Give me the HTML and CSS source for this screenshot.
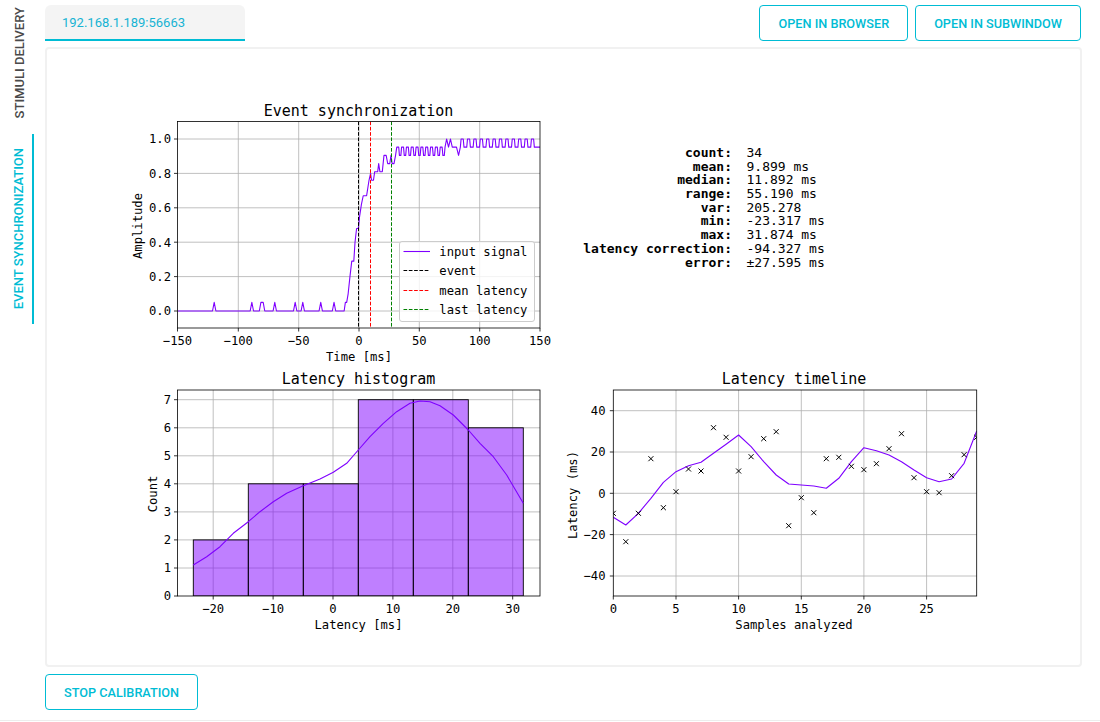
FILE: index.html
```html
<!DOCTYPE html>
<html lang="en">
<head>
<meta charset="utf-8">
<title>Event synchronization</title>
<link rel="stylesheet" href="styles.css">
</head>
<body>
<div class="app">
  <nav class="sidebar">
    <div class="vtab"><span>STIMULI DELIVERY</span></div>
    <div class="vtab active"><span>EVENT SYNCHRONIZATION</span></div>
  </nav>
  <main class="main">
    <div class="topbar">
      <div class="tab">192.168.1.189:56663</div>
      <div class="actions">
        <button class="btn">OPEN IN BROWSER</button>
        <button class="btn">OPEN IN SUBWINDOW</button>
      </div>
    </div>
    <section class="panel">
      <svg class="figure" width="1033" height="616" viewBox="47 49 1033 616">
        <defs>
          <clipPath id="c1"><rect x="177.5" y="121.5" width="362.5" height="206.5"/></clipPath>
          <clipPath id="c2"><rect x="177.5" y="390" width="362.5" height="206"/></clipPath>
          <clipPath id="c3"><rect x="613.3" y="390" width="363.4" height="206"/></clipPath>
          <path id="xm" d="M-2.5,-2.5L2.5,2.5M-2.5,2.5L2.5,-2.5"/>
        </defs>

        <!-- ============ Plot 1: Event synchronization ============ -->
        <text class="title" x="358.5" y="115.5">Event synchronization</text>
        <g class="grid">
          <line x1="238.3" y1="121.5" x2="238.3" y2="328"/>
          <line x1="298.7" y1="121.5" x2="298.7" y2="328"/>
          <line x1="359" y1="121.5" x2="359" y2="328"/>
          <line x1="419.3" y1="121.5" x2="419.3" y2="328"/>
          <line x1="479.7" y1="121.5" x2="479.7" y2="328"/>
          <line x1="177.5" y1="311" x2="540" y2="311"/>
          <line x1="177.5" y1="276.6" x2="540" y2="276.6"/>
          <line x1="177.5" y1="242.2" x2="540" y2="242.2"/>
          <line x1="177.5" y1="207.8" x2="540" y2="207.8"/>
          <line x1="177.5" y1="173.4" x2="540" y2="173.4"/>
          <line x1="177.5" y1="139" x2="540" y2="139"/>
        </g>
        <g clip-path="url(#c1)">
          <path class="sig" transform="translate(359 311) scale(1.2067 -172)" d="M-150,0 H-121.4 L-120,0.05 L-118.6,0 H-90.2 L-88.8,0.05 L-87.4,0 H-82.6 L-81.3,0.05 L-79.4,0.05 L-78.1,0 H-71.2 L-69.8,0.05 L-68.4,0 H-54.3 L-52.9,0.05 L-51.5,0 H-48 L-46.6,0.05 L-45.2,0 H-33.1 L-31.7,0.05 L-30.3,0 H-22.1 L-20.7,0.05 L-19.3,0 H-12.3 L-11.3,0.05 L-10.2,0.05 L-9,0.1 L-7.5,0.2 L-6,0.29 L-4.3,0.29 L-3.3,0.4 L-2,0.48 L-0.6,0.48 L0.5,0.55 L2,0.62 L3.5,0.67 L6.3,0.67 L8.3,0.76 L9.6,0.8 L10.4,0.76 L12,0.76 L13,0.81 L15.5,0.81 L16.3,0.857 L17.3,0.81 L19.3,0.81 L20.7,0.905 L22.5,0.905 L23.8,0.857 L25.5,0.857 L26.5,0.905 L27.5,0.857 L29,0.857 L30.3,0.905 L31.3,0.953 h1.6 l0.6,-0.048 h1.2 l0.6,0.048 h1.6 l0.6,-0.048 h1.2 l0.6,0.048 h1.6 l0.6,-0.048 h1.2 l0.6,0.048 h1.6 l0.6,-0.048 h1.2 l0.6,0.048 h1.6 l0.6,-0.048 h1.2 l0.6,0.048 h1.6 l0.6,-0.048 h1.2 l0.6,0.048 h1.6 l0.6,-0.048 h1.2 l0.6,0.048 h1.6 l0.6,-0.048 h1.2 l0.6,0.048 h1.6 l0.6,-0.048 h1.2 l0.6,0.048 h1.6 l0.6,-0.048 h1.2 l0.6,0.048 L72.6,1 L74.2,0.953 L75.8,1 L77.3,0.953 L80.8,0.953 L82.5,0.905 L84,0.953 l0.6,0.047 h1.8 l0.6,-0.047 h2.3 l0.6,0.047 h1.8 l0.6,-0.047 h2.3 l0.6,0.047 h1.8 l0.6,-0.047 h2.3 l0.6,0.047 h1.8 l0.6,-0.047 h2.3 l0.6,0.047 h1.8 l0.6,-0.047 h2.3 l0.6,0.047 h1.8 l0.6,-0.047 h2.3 l0.6,0.047 h1.8 l0.6,-0.047 h2.3 l0.6,0.047 h1.8 l0.6,-0.047 h2.3 l0.6,0.047 h1.8 l0.6,-0.047 h2.3 l0.6,0.047 h1.8 l0.6,-0.047 h2.3 l0.6,0.047 h1.8 l0.6,-0.047 h2.3 l0.6,0.047 h1.8 l0.6,-0.047 h2.3 H150"/>
          <line class="dash k" x1="358.5" y1="121.5" x2="358.5" y2="328"/>
          <line class="dash r" x1="370.5" y1="121.5" x2="370.5" y2="328"/>
          <line class="dash g" x1="391.5" y1="121.5" x2="391.5" y2="328"/>
        </g>
        <rect class="spine" x="177.5" y="121.5" width="362.5" height="206.5"/>
        <g class="ticks">
          <line x1="177.5" y1="328" x2="177.5" y2="331.5"/>
          <line x1="238.3" y1="328" x2="238.3" y2="331.5"/>
          <line x1="298.7" y1="328" x2="298.7" y2="331.5"/>
          <line x1="359" y1="328" x2="359" y2="331.5"/>
          <line x1="419.3" y1="328" x2="419.3" y2="331.5"/>
          <line x1="479.7" y1="328" x2="479.7" y2="331.5"/>
          <line x1="540" y1="328" x2="540" y2="331.5"/>
          <line x1="174" y1="311" x2="177.5" y2="311"/>
          <line x1="174" y1="276.6" x2="177.5" y2="276.6"/>
          <line x1="174" y1="242.2" x2="177.5" y2="242.2"/>
          <line x1="174" y1="207.8" x2="177.5" y2="207.8"/>
          <line x1="174" y1="173.4" x2="177.5" y2="173.4"/>
          <line x1="174" y1="139" x2="177.5" y2="139"/>
        </g>
        <g class="xt">
          <text x="177.5" y="344.5">−150</text>
          <text x="238.3" y="344.5">−100</text>
          <text x="298.7" y="344.5">−50</text>
          <text x="359" y="344.5">0</text>
          <text x="419.3" y="344.5">50</text>
          <text x="479.7" y="344.5">100</text>
          <text x="540" y="344.5">150</text>
        </g>
        <g class="yt">
          <text x="171" y="315.4">0.0</text>
          <text x="171" y="281">0.2</text>
          <text x="171" y="246.6">0.4</text>
          <text x="171" y="212.2">0.6</text>
          <text x="171" y="177.8">0.8</text>
          <text x="171" y="143.4">1.0</text>
        </g>
        <text class="lbl" x="359" y="361">Time [ms]</text>
        <text class="lbl" transform="translate(141.5 226) rotate(-90)">Amplitude</text>
        <g class="legend">
          <rect x="399.5" y="241.5" width="135" height="80" rx="2.5"/>
          <line class="sig" x1="403.5" y1="251.5" x2="430" y2="251.5"/>
          <line class="dash k" x1="403.5" y1="270.5" x2="430" y2="270.5"/>
          <line class="dash r" x1="403.5" y1="290.5" x2="430" y2="290.5"/>
          <line class="dash g" x1="403.5" y1="309.5" x2="430" y2="309.5"/>
          <text x="439.3" y="255.9">input signal</text>
          <text x="439.3" y="275.2">event</text>
          <text x="439.3" y="294.5">mean latency</text>
          <text x="439.3" y="313.5">last latency</text>
        </g>

        <!-- ============ Stats ============ -->
        <g class="stats">
          <g class="key">
            <text x="732" y="157">count:</text>
            <text x="732" y="170.7">mean:</text>
            <text x="732" y="184.4">median:</text>
            <text x="732" y="198.1">range:</text>
            <text x="732" y="211.8">var:</text>
            <text x="732" y="225.4">min:</text>
            <text x="732" y="239.1">max:</text>
            <text x="732" y="252.8">latency correction:</text>
            <text x="732" y="266.5">error:</text>
          </g>
          <g class="val">
            <text x="746.5" y="157">34</text>
            <text x="746.5" y="170.7">9.899 ms</text>
            <text x="746.5" y="184.4">11.892 ms</text>
            <text x="746.5" y="198.1">55.190 ms</text>
            <text x="746.5" y="211.8">205.278</text>
            <text x="746.5" y="225.4">-23.317 ms</text>
            <text x="746.5" y="239.1">31.874 ms</text>
            <text x="746.5" y="252.8">-94.327 ms</text>
            <text x="746.5" y="266.5">±27.595 ms</text>
          </g>
        </g>

        <!-- ============ Plot 2: Latency histogram ============ -->
        <text class="title" x="358.5" y="383.5">Latency histogram</text>
        <g class="grid">
          <line x1="213.2" y1="390" x2="213.2" y2="596"/>
          <line x1="273.1" y1="390" x2="273.1" y2="596"/>
          <line x1="333" y1="390" x2="333" y2="596"/>
          <line x1="392.9" y1="390" x2="392.9" y2="596"/>
          <line x1="452.8" y1="390" x2="452.8" y2="596"/>
          <line x1="512.7" y1="390" x2="512.7" y2="596"/>
          <line x1="177.5" y1="568" x2="540" y2="568"/>
          <line x1="177.5" y1="539.9" x2="540" y2="539.9"/>
          <line x1="177.5" y1="511.9" x2="540" y2="511.9"/>
          <line x1="177.5" y1="483.8" x2="540" y2="483.8"/>
          <line x1="177.5" y1="455.8" x2="540" y2="455.8"/>
          <line x1="177.5" y1="427.8" x2="540" y2="427.8"/>
          <line x1="177.5" y1="399.7" x2="540" y2="399.7"/>
        </g>
        <g class="bars" clip-path="url(#c2)">
          <rect x="193.3" y="539.9" width="55" height="56.1"/>
          <rect x="248.3" y="483.8" width="55" height="112.2"/>
          <rect x="303.3" y="483.8" width="55" height="112.2"/>
          <rect x="358.3" y="399.7" width="55" height="196.3"/>
          <rect x="413.3" y="399.7" width="55" height="196.3"/>
          <rect x="468.3" y="427.8" width="55" height="168.2"/>
        </g>
        <polyline class="sig" points="193.3,565 206.7,556.7 220,546.7 233.3,533.3 248.3,521.7 260,511.7 273.3,501.7 286.7,493.3 303.3,485.7 320,479 333.3,472.3 346.7,463.3 358.3,450 370,436.7 383.3,423.3 396.7,411.7 410,403.3 420,401 430,401.7 440,405.7 453.3,415 468.3,430 480,443.3 493.3,456.7 506.7,475 523.3,503.3"/>
        <rect class="spine" x="177.5" y="390" width="362.5" height="206"/>
        <g class="ticks">
          <line x1="213.2" y1="596" x2="213.2" y2="599.5"/>
          <line x1="273.1" y1="596" x2="273.1" y2="599.5"/>
          <line x1="333" y1="596" x2="333" y2="599.5"/>
          <line x1="392.9" y1="596" x2="392.9" y2="599.5"/>
          <line x1="452.8" y1="596" x2="452.8" y2="599.5"/>
          <line x1="512.7" y1="596" x2="512.7" y2="599.5"/>
          <line x1="174" y1="596" x2="177.5" y2="596"/>
          <line x1="174" y1="568" x2="177.5" y2="568"/>
          <line x1="174" y1="539.9" x2="177.5" y2="539.9"/>
          <line x1="174" y1="511.9" x2="177.5" y2="511.9"/>
          <line x1="174" y1="483.8" x2="177.5" y2="483.8"/>
          <line x1="174" y1="455.8" x2="177.5" y2="455.8"/>
          <line x1="174" y1="427.8" x2="177.5" y2="427.8"/>
          <line x1="174" y1="399.7" x2="177.5" y2="399.7"/>
        </g>
        <g class="xt">
          <text x="213.2" y="613">−20</text>
          <text x="273.1" y="613">−10</text>
          <text x="333" y="613">0</text>
          <text x="392.9" y="613">10</text>
          <text x="452.8" y="613">20</text>
          <text x="512.7" y="613">30</text>
        </g>
        <g class="yt">
          <text x="171" y="600.4">0</text>
          <text x="171" y="572.4">1</text>
          <text x="171" y="544.3">2</text>
          <text x="171" y="516.3">3</text>
          <text x="171" y="488.2">4</text>
          <text x="171" y="460.2">5</text>
          <text x="171" y="432.2">6</text>
          <text x="171" y="404.1">7</text>
        </g>
        <text class="lbl" x="358.5" y="628.5">Latency [ms]</text>
        <text class="lbl" transform="translate(157 494) rotate(-90)">Count</text>

        <!-- ============ Plot 3: Latency timeline ============ -->
        <text class="title" x="794" y="383.5">Latency timeline</text>
        <g class="grid">
          <line x1="676" y1="390" x2="676" y2="596"/>
          <line x1="738.6" y1="390" x2="738.6" y2="596"/>
          <line x1="801.3" y1="390" x2="801.3" y2="596"/>
          <line x1="863.9" y1="390" x2="863.9" y2="596"/>
          <line x1="926.6" y1="390" x2="926.6" y2="596"/>
          <line x1="613.3" y1="576" x2="976.7" y2="576"/>
          <line x1="613.3" y1="534.6" x2="976.7" y2="534.6"/>
          <line x1="613.3" y1="493.3" x2="976.7" y2="493.3"/>
          <line x1="613.3" y1="452" x2="976.7" y2="452"/>
          <line x1="613.3" y1="410.7" x2="976.7" y2="410.7"/>
        </g>
        <g clip-path="url(#c3)">
          <polyline class="sig" points="613.3,517.3 625.8,525 638.4,513.3 650.9,498.3 663.4,482.3 676,471.7 688.5,465.7 701,462.3 713.5,453.3 726.1,444.3 738.6,435 751.1,446.7 763.7,461.7 776.2,475 788.7,484 801.3,485 813.8,486 826.3,488.3 838.8,478.3 851.4,461.7 863.9,447.7 876.4,450.7 889,455 901.5,461.7 914,470 926.6,477.7 939.1,481.7 951.6,479 964.1,463.3 976.7,431"/>
          <g class="marks">
            <use href="#xm" x="613.3" y="513.3"/>
            <use href="#xm" x="625.8" y="541.7"/>
            <use href="#xm" x="638.4" y="513.3"/>
            <use href="#xm" x="650.9" y="458.7"/>
            <use href="#xm" x="663.4" y="507.7"/>
            <use href="#xm" x="676" y="491.7"/>
            <use href="#xm" x="688.5" y="469"/>
            <use href="#xm" x="701" y="471"/>
            <use href="#xm" x="713.5" y="427.7"/>
            <use href="#xm" x="726.1" y="437.3"/>
            <use href="#xm" x="738.6" y="471"/>
            <use href="#xm" x="751.1" y="456.7"/>
            <use href="#xm" x="763.7" y="438.7"/>
            <use href="#xm" x="776.2" y="431.7"/>
            <use href="#xm" x="788.7" y="525.7"/>
            <use href="#xm" x="801.3" y="497.7"/>
            <use href="#xm" x="813.8" y="512.7"/>
            <use href="#xm" x="826.3" y="458.7"/>
            <use href="#xm" x="838.8" y="457.3"/>
            <use href="#xm" x="851.4" y="466.3"/>
            <use href="#xm" x="863.9" y="469.7"/>
            <use href="#xm" x="876.4" y="463.7"/>
            <use href="#xm" x="889" y="448.7"/>
            <use href="#xm" x="901.5" y="433.7"/>
            <use href="#xm" x="914" y="477.7"/>
            <use href="#xm" x="926.6" y="491.7"/>
            <use href="#xm" x="939.1" y="492.7"/>
            <use href="#xm" x="951.6" y="475.7"/>
            <use href="#xm" x="964.1" y="454.7"/>
            <use href="#xm" x="976.7" y="437.3"/>
          </g>
        </g>
        <rect class="spine" x="613.3" y="390" width="363.4" height="206"/>
        <g class="ticks">
          <line x1="613.3" y1="596" x2="613.3" y2="599.5"/>
          <line x1="676" y1="596" x2="676" y2="599.5"/>
          <line x1="738.6" y1="596" x2="738.6" y2="599.5"/>
          <line x1="801.3" y1="596" x2="801.3" y2="599.5"/>
          <line x1="863.9" y1="596" x2="863.9" y2="599.5"/>
          <line x1="926.6" y1="596" x2="926.6" y2="599.5"/>
          <line x1="609.8" y1="576" x2="613.3" y2="576"/>
          <line x1="609.8" y1="534.6" x2="613.3" y2="534.6"/>
          <line x1="609.8" y1="493.3" x2="613.3" y2="493.3"/>
          <line x1="609.8" y1="452" x2="613.3" y2="452"/>
          <line x1="609.8" y1="410.7" x2="613.3" y2="410.7"/>
        </g>
        <g class="xt">
          <text x="613.3" y="613">0</text>
          <text x="676" y="613">5</text>
          <text x="738.6" y="613">10</text>
          <text x="801.3" y="613">15</text>
          <text x="863.9" y="613">20</text>
          <text x="926.6" y="613">25</text>
        </g>
        <g class="yt">
          <text x="605.5" y="580.4">−40</text>
          <text x="605.5" y="539">−20</text>
          <text x="605.5" y="497.7">0</text>
          <text x="605.5" y="456.4">20</text>
          <text x="605.5" y="415.1">40</text>
        </g>
        <text class="lbl" x="794" y="628.5">Samples analyzed</text>
        <text class="lbl" transform="translate(577 495) rotate(-90)">Latency (ms)</text>
      </svg>
    </section>
    <button class="btn stop">STOP CALIBRATION</button>
  </main>
</div>
</body>
</html>
```
FILE: styles.css
```css
html, body {
  margin: 0;
  padding: 0;
}

body {
  width: 1100px;
  height: 722px;
  overflow: hidden;
  background: #ffffff;
  font-family: Roboto, "Liberation Sans", sans-serif;
}

.app {
  display: flex;
  height: 720px;
  border-bottom: 1px solid #ededed;
}

/* ---------- vertical side tabs ---------- */
.sidebar {
  width: 45px;
  flex: none;
  display: flex;
  flex-direction: column;
  gap: 8px;
}

.vtab {
  width: 34px;
  box-sizing: border-box;
  padding-left: 4px;
  display: flex;
  align-items: center;
  justify-content: center;
}

.vtab:first-child {
  height: 126px;
}

.vtab span {
  writing-mode: vertical-rl;
  transform: rotate(180deg);
  white-space: nowrap;
  font-size: 13px;
  font-weight: 500;
  color: #4a4a4a;
}

.vtab.active {
  height: 190px;
  border-right: 2px solid #00bcd4;
}

.vtab.active span {
  color: #00bcd4;
}

/* ---------- main column ---------- */
.main {
  flex: 1;
  display: flex;
  flex-direction: column;
  align-items: flex-start;
  padding: 5px 18px 0 0;
}

.topbar {
  align-self: stretch;
  display: flex;
  justify-content: space-between;
  height: 36px;
}

.tab {
  width: 200px;
  height: 36px;
  box-sizing: border-box;
  padding-left: 17px;
  display: flex;
  align-items: center;
  background: #f4f4f4;
  border-radius: 6px 6px 0 0;
  border-bottom: 2px solid #00bcd4;
  color: #17b3d3;
  font-size: 13px;
}

.actions {
  display: flex;
  gap: 7px;
  padding-right: 1px;
}

.btn {
  height: 36px;
  box-sizing: border-box;
  padding: 0 18px;
  border: 1px solid #00bcd4;
  border-radius: 4px;
  background: #ffffff;
  color: #00bcd4;
  font-family: Roboto, "Liberation Sans", sans-serif;
  font-size: 12.7px;
  font-weight: 500;
  cursor: pointer;
}

.panel {
  align-self: stretch;
  margin-top: 6px;
  height: 620px;
  box-sizing: border-box;
  border: 2px solid #f1f1f1;
  border-radius: 4px;
}

.stop {
  margin-top: 7px;
}

/* ---------- matplotlib-like figure ---------- */
.figure {
  display: block;
  font-family: "DejaVu Sans Mono", monospace;
}

.figure text {
  fill: #000000;
  font-size: 12.2px;
}

.figure .title {
  font-size: 15px;
  text-anchor: middle;
}

.figure .lbl {
  text-anchor: middle;
}

.figure .xt text {
  text-anchor: middle;
}

.figure .yt text {
  text-anchor: end;
}

.grid line {
  stroke: #b0b0b0;
  stroke-width: 0.8;
}

.spine {
  fill: none;
  stroke: #000000;
  stroke-width: 0.8;
}

.ticks line {
  stroke: #000000;
  stroke-width: 0.8;
}

.sig {
  fill: none;
  stroke: #7f00ff;
  stroke-width: 1.1;
  stroke-linejoin: round;
  vector-effect: non-scaling-stroke;
}

.dash {
  stroke-width: 1;
  stroke-dasharray: 3.7 1.6;
}

.dash.k { stroke: #000000; }
.dash.r { stroke: #ff0000; }
.dash.g { stroke: #008000; }

.legend rect {
  fill: #ffffff;
  fill-opacity: 0.8;
  stroke: #cccccc;
  stroke-width: 1;
}

.legend text {
  font-size: 12.2px;
}

.stats text {
  font-size: 13px;
}

.stats .key text {
  text-anchor: end;
  font-weight: bold;
}

.bars rect {
  fill: #8000ff;
  fill-opacity: 0.5;
  stroke: #000000;
  stroke-width: 0.9;
}

.marks {
  fill: none;
  stroke: #000000;
  stroke-width: 1;
}
```
